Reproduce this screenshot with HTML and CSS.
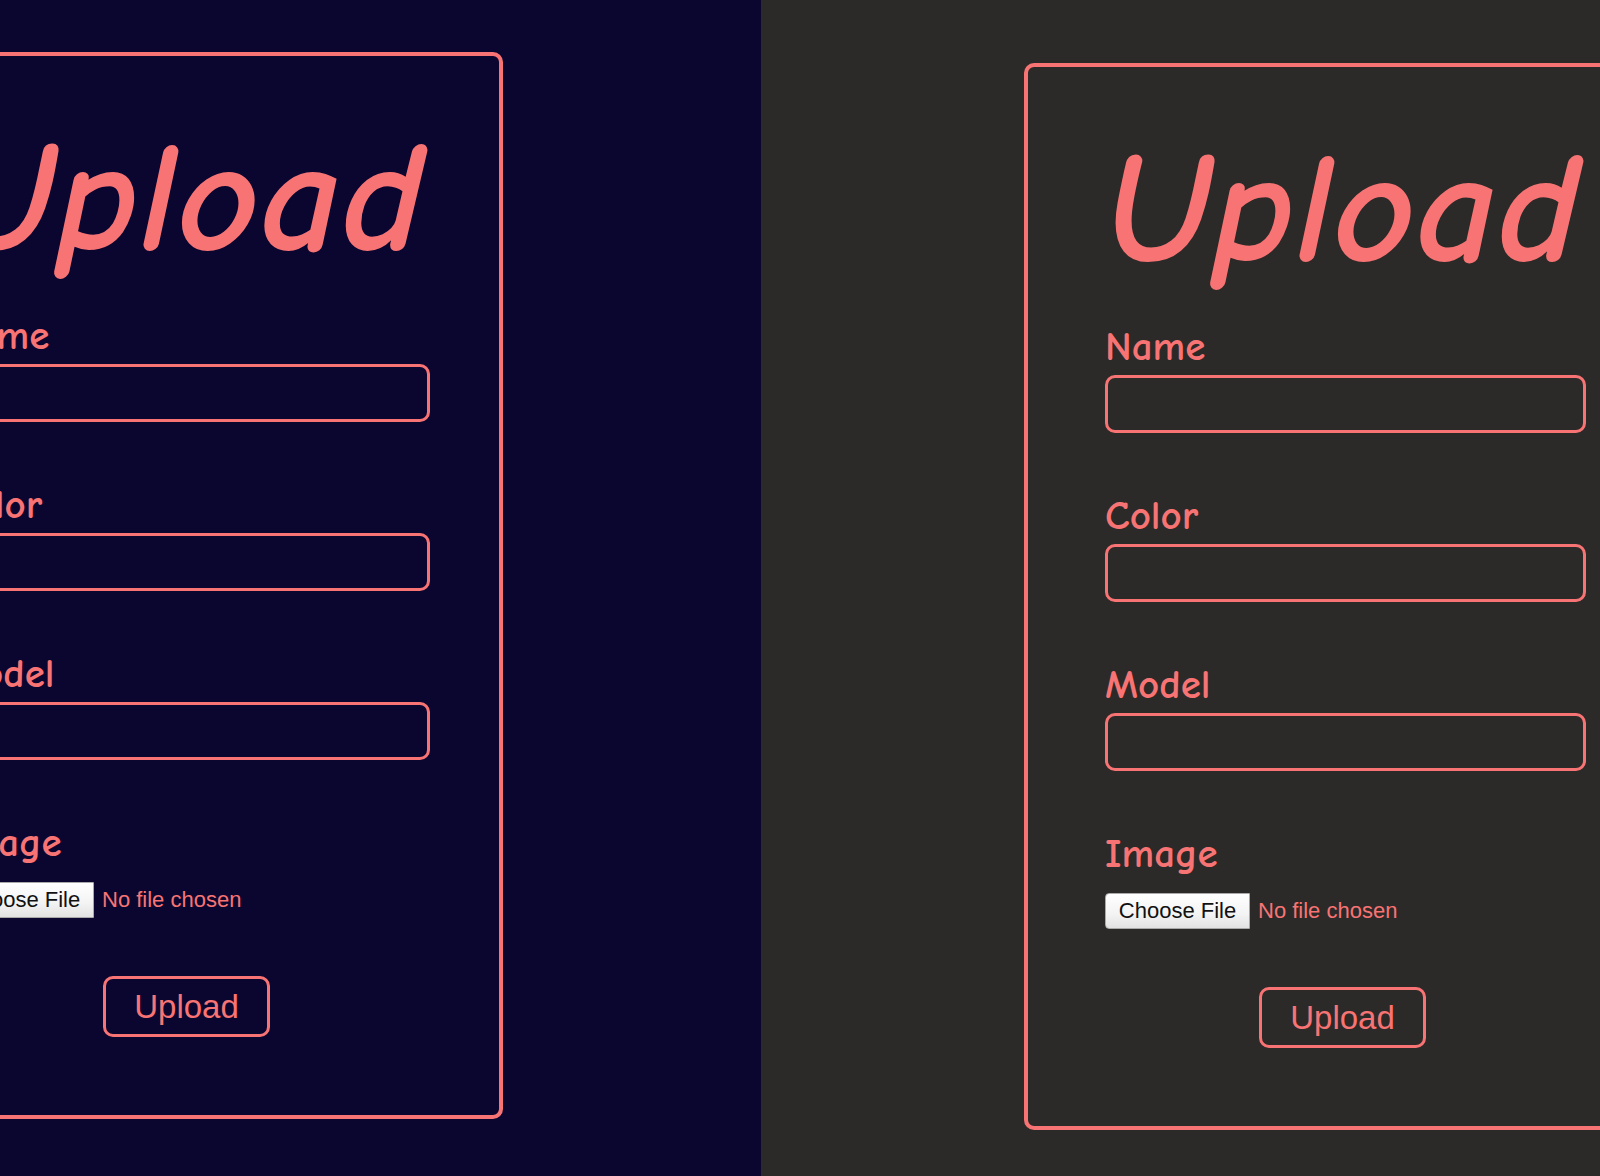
FILE: index.html
```html
<!DOCTYPE html>
<html lang="en">
<head>
<meta charset="utf-8">
<title>Upload</title>
<link rel="stylesheet" href="styles.css">
</head>
<body>
<div class="screen">
  <section class="panel panel-navy">
    <form class="card card-left">
      <h1 class="title">Upload</h1>
      <label class="label">Name</label>
      <input class="field" type="text">
      <label class="label">Color</label>
      <input class="field" type="text">
      <label class="label">Model</label>
      <input class="field" type="text">
      <label class="label label-image">Image</label>
      <div class="file">
        <span class="file-btn">Choose File</span>
        <span class="file-name">No file chosen</span>
      </div>
      <button class="submit" type="button">Upload</button>
    </form>
  </section>
  <section class="panel panel-charcoal">
    <form class="card card-right">
      <h1 class="title">Upload</h1>
      <label class="label">Name</label>
      <input class="field" type="text">
      <label class="label">Color</label>
      <input class="field" type="text">
      <label class="label">Model</label>
      <input class="field" type="text">
      <label class="label label-image">Image</label>
      <div class="file">
        <span class="file-btn">Choose File</span>
        <span class="file-name">No file chosen</span>
      </div>
      <button class="submit" type="button">Upload</button>
    </form>
  </section>
</div>
</body>
</html>
```
FILE: styles.css
```css
* { box-sizing: border-box; }
html, body { margin: 0; padding: 0; }
body { width: 1600px; height: 1176px; overflow: hidden; }

.screen {
  display: flex;
  width: 1600px;
  height: 1176px;
}

.panel {
  overflow: hidden;
  display: flex;
  align-items: flex-start;
}
.panel-navy {
  width: 761px;
  flex: 0 0 761px;
  background: #0a0630;
}
.panel-charcoal {
  flex: 1 1 auto;
  background: #2b2a28;
}

.card {
  flex: 0 0 635px;
  width: 635px;
  display: flex;
  flex-direction: column;
  align-items: flex-start;
  border: 4px solid #f87474;
  border-radius: 10px;
  padding: 0 69px 78px 77px;
  color: #f87474;
  font-family: "Comic Sans MS", "Comic Neue", "Lato", sans-serif;
}
.card-left {
  margin-left: -132px;
  margin-top: 52px;
}
.card-right {
  margin-left: 263px;
  margin-top: 63px;
}

.title {
  margin: 68px 0 0 0;
  font-size: 158px;
  line-height: 150px;
  font-style: italic;
  font-weight: 700;
  letter-spacing: 1px;
}

.label {
  display: block;
  font-size: 41px;
  line-height: 42px;
  font-weight: 700;
  margin-top: 62px;
}
.title + .label { margin-top: 41px; }

.field {
  display: block;
  width: 481px;
  height: 58px;
  margin: 7px 0 0 0;
  border: 3px solid #f87474;
  border-radius: 10px;
  background: transparent;
  outline: none;
}

.file {
  display: flex;
  align-items: center;
  gap: 8px;
  margin-top: 18px;
  height: 36px;
  font-family: "Liberation Sans", Arial, sans-serif;
  font-size: 22px;
}
.file-btn {
  display: flex;
  align-items: center;
  justify-content: center;
  width: 145px;
  height: 36px;
  color: #111;
  background: linear-gradient(#ffffff, #f3f3f3 60%, #e2e2e2);
  border: 1px solid #a9a9a9;
  border-radius: 4px 0 0 4px;
}
.file-name { color: #f87474; }

.submit {
  margin: 58px 0 0 154px;
  width: 167px;
  height: 61px;
  border: 3px solid #f87474;
  border-radius: 10px;
  background: transparent;
  color: #f87474;
  font-family: "Liberation Sans", Arial, sans-serif;
  font-size: 33px;
  padding: 0;
}
```
